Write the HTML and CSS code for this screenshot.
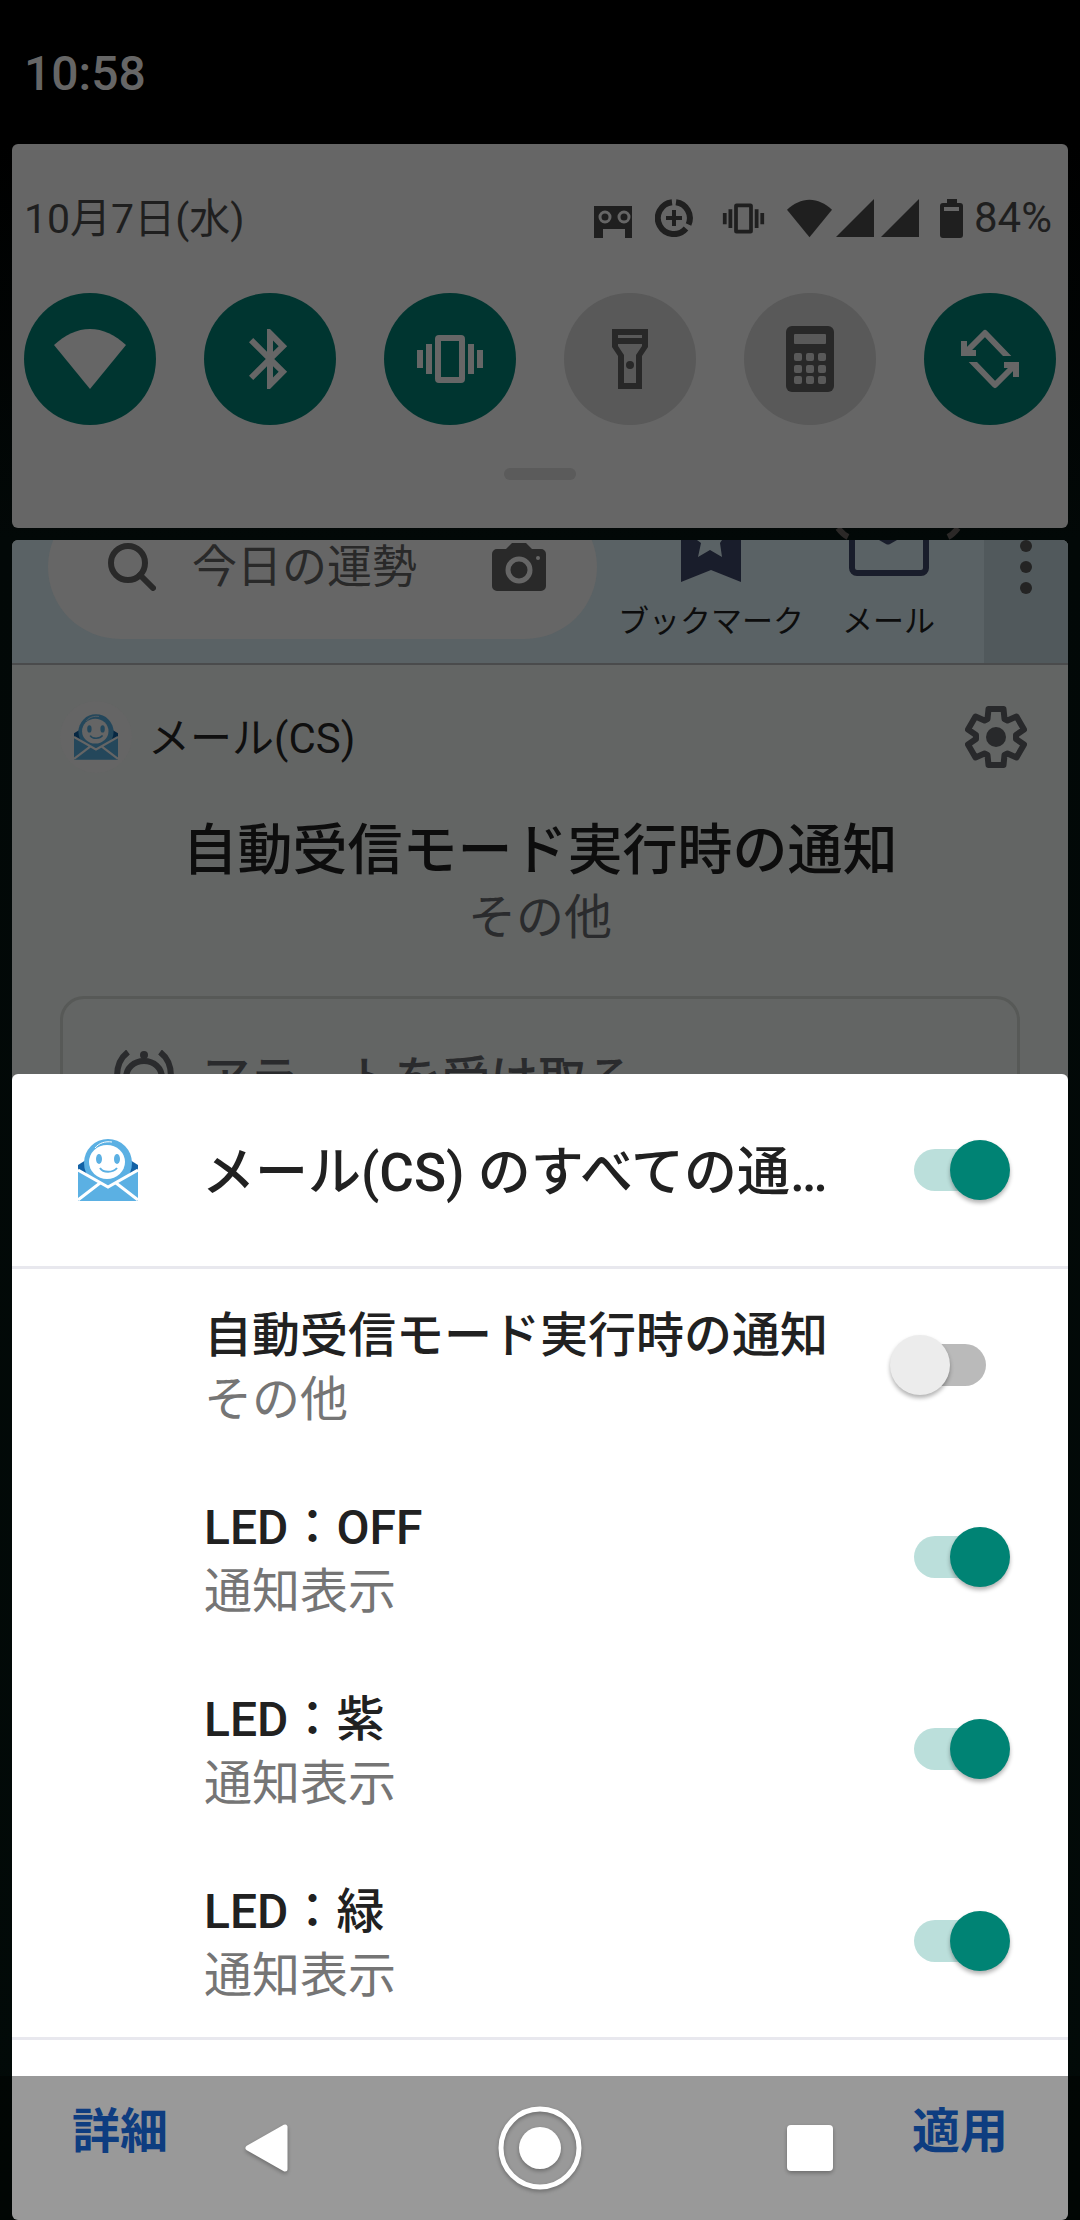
FILE: index.html
```html
<!DOCTYPE html>
<html lang="ja">
<head>
<meta charset="utf-8">
<meta name="viewport" content="width=device-width, initial-scale=1">
<title>通知設定</title>
<link rel="stylesheet" href="styles.css">
</head>
<body>
<svg class="sprite" aria-hidden="true">
  <symbol id="wifi" viewBox="0 0 72 72"><path d="M36 66 0 22C11 12 23 6 36 6s25 6 36 16Z"/></symbol>
  <symbol id="vibrate" viewBox="0 0 72 72">
    <path d="M3 27h6v18H3zM12 21h6v30h-6zM54 21h6v30h-6zM63 27h6v18h-6z"/>
    <path fill-rule="evenodd" d="M25 12h22a4 4 0 0 1 4 4v40a4 4 0 0 1-4 4H25a4 4 0 0 1-4-4V16a4 4 0 0 1 4-4Zm2 6v36h18V18Z"/>
  </symbol>
  <symbol id="signal" viewBox="0 0 38 38"><path d="M38 0v38H0z"/></symbol>
  <symbol id="mail-app" viewBox="0 0 60 62">
    <path class="mail-flap" d="M0 26 8 21h44l8 5v6L30 48 0 32Z"/>
    <circle class="mail-body" cx="30" cy="24" r="24"/>
    <ellipse class="mail-face" cx="29" cy="23" rx="18" ry="17"/>
    <path class="mail-line" d="M17 9C21 4 27 2 34 3" stroke-width="1"/>
    <ellipse class="mail-body" cx="21" cy="20" rx="3" ry="5"/>
    <ellipse class="mail-body" cx="39" cy="20" rx="3" ry="5"/>
    <path class="mail-smile" d="M22 29c3 5 13 5 17 0"/>
    <path class="mail-body" d="M0 32 30 47 60 32V62H0Z"/>
    <path class="mail-line" d="m0 31 30 17 30-17M0 61l22-17M60 61 38 44" stroke-width="3"/>
  </symbol>
</svg>

<header class="status-bar"><time datetime="10:58">10:58</time></header>

<main>
  <section class="quick panel" aria-label="クイック設定">
    <div class="quick-status">
      <span class="date">10月7日(水)</span>
      <div class="indicators">
        <svg class="i-tape" viewBox="0 0 38 40"><path d="M0 8h38v32h-7v-9H9v9H0z"/><g class="tape-reel"><circle cx="11" cy="19" r="5"/><circle cx="30" cy="19" r="5"/></g></svg>
        <svg class="i-data" viewBox="0 0 38 38"><path class="thick" d="M21 3.200A16 16 0 0 1 33.500 25.500M31 29.500A16 16 0 1 1 17 3.200"/><path class="plus" d="M19 11v16M11 19h16"/></svg>
        <svg class="i-vibrate"><use href="#vibrate"/></svg>
        <svg class="i-wifi"><use href="#wifi"/></svg>
        <svg class="i-signal"><use href="#signal"/></svg>
        <svg class="i-signal"><use href="#signal"/></svg>
        <svg class="i-battery" viewBox="0 0 23 39"><path fill-rule="evenodd" d="M7 0h10v4h3a3 3 0 0 1 3 3v29a3 3 0 0 1-3 3H3a3 3 0 0 1-3-3V7a3 3 0 0 1 3-3h4ZM4 8v4h15V8Z"/></svg>
        <span>84%</span>
      </div>
    </div>
    <div class="tiles">
      <button class="tile on" aria-label="Wi-Fi"><svg><use href="#wifi"/></svg></button>
      <button class="tile on" aria-label="Bluetooth"><svg viewBox="0 0 24 24"><path d="M17.710 7.710 12 2h-1v7.590L6.410 5 5 6.410 10.590 12 5 17.590 6.410 19 11 14.410V22h1l5.710-5.710-4.300-4.290 4.300-4.290zM13 5.830l1.880 1.880L13 9.590V5.830zm1.880 10.460L13 18.170v-3.760l1.880 1.880z"/></svg></button>
      <button class="tile on" aria-label="バイブ"><svg><use href="#vibrate"/></svg></button>
      <button class="tile" aria-label="ライト"><svg viewBox="0 0 72 72"><path fill-rule="evenodd" d="M18 6h36v18l-6 9v33H24V33l-6-9Zm6 6v3h24v-3Zm0 9v2l6 9v28h12V32l6-9v-2Z"/><circle cx="36" cy="42" r="4"/></svg></button>
      <button class="tile" aria-label="電卓"><svg viewBox="0 0 72 72"><rect x="12" y="3" width="48" height="66" rx="6"/><g class="calc-keys"><rect x="20" y="11" width="32" height="10" rx="1"/><rect x="20" y="30" width="8" height="8" rx="2"/><rect x="32" y="30" width="8" height="8" rx="2"/><rect x="44" y="30" width="8" height="8" rx="2"/><rect x="20" y="42" width="8" height="8" rx="2"/><rect x="32" y="42" width="8" height="8" rx="2"/><rect x="44" y="42" width="8" height="8" rx="2"/><rect x="20" y="53" width="8" height="8" rx="2"/><rect x="32" y="53" width="8" height="8" rx="2"/><rect x="44" y="53" width="8" height="8" rx="2"/></g></svg></button>
      <button class="tile on" aria-label="自動回転"><svg viewBox="0 0 72 72"><clipPath id="half"><rect width="72" height="33"/></clipPath><g id="turn" clip-path="url(#half)"><path d="M7 18h6v9h9v6H7z"/><path class="turn-line" d="M11 30 31 10l26 27"/></g><use href="#turn" transform="rotate(180 36 36)"/></svg></button>
    </div>
    <div class="handle"></div>
  </section>

  <svg class="gap" viewBox="0 0 1056 12" preserveAspectRatio="none" aria-hidden="true"><path d="M826 0c3 4 6 7 10 9M946 0c-3 4-6 7-10 9"/></svg>

  <section class="notice panel">
    <div class="widget">
      <div class="search">
        <svg class="i-search" viewBox="0 0 48 48"><circle cx="20" cy="20" r="17"/><path d="m32 32 13 13"/></svg>
        <span class="search-text">今日の運勢</span>
        <svg class="i-camera" viewBox="0 0 54 48"><path d="M5 6h9l6-6h14l6 6h9a5 5 0 0 1 5 5v32a5 5 0 0 1-5 5H5a5 5 0 0 1-5-5V11a5 5 0 0 1 5-5Z"/><circle class="lens" cx="27" cy="27" r="11"/><circle class="flash" cx="46" cy="15" r="2"/></svg>
      </div>
      <button class="action"><svg width="60" height="42" viewBox="0 0 60 42"><path class="navy" d="M0 0h16l4 3-3 14 12-7 12 7-2-14 2-3h19v42L30 30 0 42Z"/></svg><span>ブックマーク</span></button>
      <button class="action"><svg width="80" height="36" viewBox="0 0 80 36"><path class="navy-line" d="M3-3v31a5 5 0 0 0 5 5h64a5 5 0 0 0 5-5V-3"/><path class="navy" d="M30 0h18l-7 4q-2 1-4 0Z"/></svg><span>メール</span></button>
      <button class="more" aria-label="その他のオプション"><svg width="12" height="54" viewBox="0 0 12 54"><circle cx="6" cy="6" r="6"/><circle cx="6" cy="27" r="6"/><circle cx="6" cy="48" r="6"/></svg></button>
    </div>
    <div class="app-row">
      <span class="badge"><svg class="mail dim"><use href="#mail-app"/></svg></span>
      <span class="app-name">メール(CS)</span>
      <button class="gear" aria-label="設定"><svg viewBox="-31 -31 62 62"><path d="M-7.500-28 7.500-28 8.500-18 11.500-16.500 20.500-20.500 28-7.500 20-2 20 2 28 7.500 20.500 20.500 11.500 16.500 8.500 18 7.500 28-7.500 28-8.500 18-11.500 16.500-20.500 20.500-28 7.500-20 2-20-2-28-7.500-20.500-20.500-11.500-16.500-8.500-18Z"/><circle r="10"/></svg></button>
    </div>
    <h1>自動受信モード実行時の通知</h1>
    <p class="category">その他</p>
    <div class="alert-card">
      <svg viewBox="0 0 60 60"><path d="M12 48V28c0-10 8-17 18-17s18 7 18 17v20M6 54h48M14 2C6 8 3 16 3 26M46 2c8 6 11 14 11 24"/><circle cx="30" cy="5" r="4"/></svg>
      <span>アラートを受け取る</span>
    </div>
  </section>
</main>

<section class="sheet" role="dialog" aria-label="通知の管理">
  <div class="row head">
    <svg class="mail"><use href="#mail-app"/></svg>
    <label class="text" for="all"><span class="title">メール(CS) のすべての通…</span></label>
    <input id="all" class="switch" type="checkbox" checked>
  </div>
  <div class="channels">
    <div class="row"><label class="text" for="c1"><span class="title">自動受信モード実行時の通知</span><span class="sub">その他</span></label><input id="c1" class="switch" type="checkbox"></div>
    <div class="row"><label class="text" for="c2"><span class="title">LED：OFF</span><span class="sub">通知表示</span></label><input id="c2" class="switch" type="checkbox" checked></div>
    <div class="row"><label class="text" for="c3"><span class="title">LED：紫</span><span class="sub">通知表示</span></label><input id="c3" class="switch" type="checkbox" checked></div>
    <div class="row"><label class="text" for="c4"><span class="title">LED：緑</span><span class="sub">通知表示</span></label><input id="c4" class="switch" type="checkbox" checked></div>
  </div>
  <div class="sheet-actions"><button>詳細</button><button>適用</button></div>
</section>

<nav class="nav" aria-label="ナビゲーション">
  <button aria-label="戻る"><svg viewBox="0 0 84 84"><path class="round" d="M20 42 57 21v42Z"/></svg></button>
  <button aria-label="ホーム"><svg viewBox="0 0 84 84"><circle class="ring" cx="42" cy="42" r="39"/><circle cx="42" cy="42" r="21"/></svg></button>
  <button aria-label="履歴"><svg viewBox="0 0 84 84"><rect x="19" y="19" width="46" height="46" rx="4"/></svg></button>
</nav>
</body>
</html>
```
FILE: styles.css
```css
* { box-sizing: border-box; }

body {
  margin: 0;
  min-height: 100vh;
  overflow: hidden;
  background: linear-gradient(#000 144px, #020807 540px, #020a08);
  color: #1f1f1f;
  font-family: Roboto, "Noto Sans CJK JP", sans-serif;
}

button {
  margin: 0;
  padding: 0;
  border: 0;
  background: none;
  color: inherit;
  font: inherit;
}

svg { display: block; fill: currentColor; flex: none; }
.sprite { position: absolute; width: 0; height: 0; }

.status-bar {
  display: flex;
  align-items: center;
  height: 144px;
  padding: 4px 24px 0;
  color: #666;
  font-size: 48px;
  font-weight: 500;
  line-height: 56px;
}

main { padding: 0 12px; }
.panel { border-radius: 6px; overflow: hidden; }

/* Quick settings */
.quick { height: 384px; padding: 48px 12px; background: #666; }

.quick-status {
  display: flex;
  justify-content: space-between;
  align-items: center;
  height: 52px;
  padding-right: 4px;
  font-size: 42px;
  line-height: 52px;
}
.date { padding-top: 2px; font-size: 41px; }

.indicators { display: flex; align-items: center; }
.i-tape { width: 38px; height: 40px; margin-right: 23px; }
.tape-reel { fill: none; stroke: #666; stroke-width: 3; }
.i-data { width: 38px; height: 38px; margin-right: 28px; }
.thick, .plus { fill: none; stroke: currentColor; stroke-width: 6; }
.plus { stroke-width: 4; }
.i-vibrate, .i-wifi { width: 45px; height: 45px; }
.i-vibrate { margin-right: 21px; }
.i-wifi { margin-right: 4px; }
.i-signal { width: 38px; height: 38px; margin-right: 7px; }
.i-battery { width: 23px; height: 39px; margin: 0 11px 0 14px; }

.tiles { display: flex; justify-content: space-between; margin-top: 49px; }
.tile {
  display: grid;
  place-items: center;
  width: 132px;
  height: 132px;
  border-radius: 50%;
  background: #595959;
  color: #282828;
}
.tile.on { background: #003530; color: #666; }
.tile svg { width: 72px; height: 72px; }
.calc-keys { fill: #595959; }
.turn-line { fill: none; stroke: currentColor; stroke-width: 6; stroke-linejoin: round; }

.handle {
  width: 72px;
  height: 12px;
  margin: 43px auto 0;
  border-radius: 6px;
  background: #5b5b5b;
}

.gap { width: 100%; height: 12px; fill: none; stroke: #2b2827; stroke-width: 6; }

/* Notification behind the sheet */
.notice { height: 600px; background: #636564; }

.widget {
  display: flex;
  height: 125px;
  border-bottom: 2px solid #4a4b4c;
  background: #5a6265;
  overflow: hidden;
}

.search {
  display: flex;
  flex: 1;
  align-items: center;
  height: 144px;
  margin: -45px 21px 0 36px;
  padding: 0 51px 0 60px;
  border-radius: 72px;
  background: #666;
  color: #292929;
}
.i-search { width: 48px; height: 48px; fill: none; stroke: currentColor; stroke-width: 6; stroke-linecap: round; }
.search-text { flex: 1; margin-left: 36px; padding-top: 2px; font-size: 45px; line-height: 60px; }
.i-camera { width: 54px; height: 48px; }
.lens { stroke: #666; stroke-width: 5; }
.flash { fill: #666; }

.action {
  display: grid;
  grid-template-rows: 64px 36px;
  align-content: start;
  justify-items: center;
  margin-right: 38px;
  color: #0d0d0d;
  font-size: 31px;
  line-height: 36px;
}
.action + .more { margin-left: 11px; }
.navy { fill: #191d2b; }
.navy-line { fill: none; stroke: #191d2b; stroke-width: 6; }
.more { display: flex; justify-content: center; width: 84px; background: #51595c; color: #242424; }

.app-row {
  display: flex;
  align-items: center;
  height: 144px;
  padding: 0 41px 0 48px;
}
.badge {
  display: grid;
  place-items: center;
  width: 72px;
  height: 72px;
  border-radius: 50%;
  background: #656565;
}
.app-name { flex: 1; margin-left: 16px; padding-top: 4px; color: #0f0f0f; font-size: 42px; line-height: 52px; }
.gear { color: #28292b; }
.gear svg { width: 62px; height: 62px; }
.gear path { fill: none; stroke: currentColor; stroke-width: 6; stroke-linejoin: round; }

.mail {
  --body: #5bb0e3;
  --flap: #1261a5;
  --face: #fff;
  width: 60px;
  height: 62px;
}
.mail.dim { --body: #24475b; --flap: #072742; --face: #656565; width: 44px; height: 46px; }
.mail-body { fill: var(--body); }
.mail-flap { fill: var(--flap); }
.mail-face { fill: var(--face); }
.mail-line { fill: none; stroke: var(--face); }
.mail-smile { fill: none; stroke: var(--body); stroke-width: 2; }

h1 {
  margin: 0;
  padding-top: 7px;
  color: #0d0d0d;
  font-size: 55px;
  font-weight: 500;
  line-height: 68px;
  text-align: center;
}
.category { margin: 0; color: #2a2b2d; font-size: 48px; line-height: 68px; text-align: center; }

.alert-card {
  display: flex;
  align-items: center;
  gap: 28px;
  height: 168px;
  margin: 44px 48px 0;
  padding: 0 51px;
  border: 3px solid #575957;
  border-radius: 24px;
  color: #2a2b2d;
  font-size: 48px;
  font-weight: 500;
  line-height: 64px;
}
.alert-card svg { width: 60px; height: 60px; }
.alert-card path { fill: none; stroke: currentColor; stroke-width: 6; }

/* Channel sheet */
.sheet {
  position: fixed;
  right: 12px;
  bottom: 0;
  left: 12px;
  border-radius: 6px;
  background: #fff;
}

.row {
  display: flex;
  align-items: center;
  height: 192px;
  padding: 0 58px 0 192px;
}
.head { padding-left: 66px; }
.head .text { margin-left: 64px; }
.head .title { font-size: 53px; }
.text {
  display: flex;
  flex: 1;
  flex-direction: column;
  padding-top: 5px;
  font-size: 48px;
  line-height: 64px;
  white-space: nowrap;
}
.title { color: #212121; font-weight: 500; }
.sub { color: #757575; }

.channels { border: solid #e8e8ee; border-width: 3px 0; }

.switch {
  display: grid;
  flex: none;
  align-items: center;
  width: 120px;
  height: 60px;
  margin: 0;
  appearance: none;
}
.switch::before, .switch::after { grid-area: 1 / 1; content: ""; }
.switch::before { width: 84px; height: 42px; margin-left: 12px; border-radius: 21px; background: #bababa; }
.switch::after {
  width: 60px;
  height: 60px;
  border-radius: 50%;
  background: #ececec;
  box-shadow: 0 3px 4px rgba(0, 0, 0, .3);
}
.switch:checked::before { margin-left: 24px; background: #bbdfdb; }
.switch:checked::after { justify-self: end; background: #008374; }

.sheet-actions {
  display: flex;
  justify-content: space-between;
  align-items: center;
  height: 180px;
  padding: 4px 60px 0;
  color: #1866d5;
  font-size: 48px;
  font-weight: 700;
  line-height: 64px;
}

.nav {
  position: fixed;
  right: 0;
  bottom: 0;
  left: 0;
  display: flex;
  justify-content: center;
  gap: 186px;
  height: 144px;
  background: rgba(0, 0, 0, .4);
  color: #fff;
}
.nav svg { width: 84px; height: 84px; filter: drop-shadow(0 2px 2px rgba(0, 0, 0, .3)); }
.ring { fill: none; stroke: currentColor; stroke-width: 5; }
.round { stroke: currentColor; stroke-width: 5; stroke-linejoin: round; }
```
